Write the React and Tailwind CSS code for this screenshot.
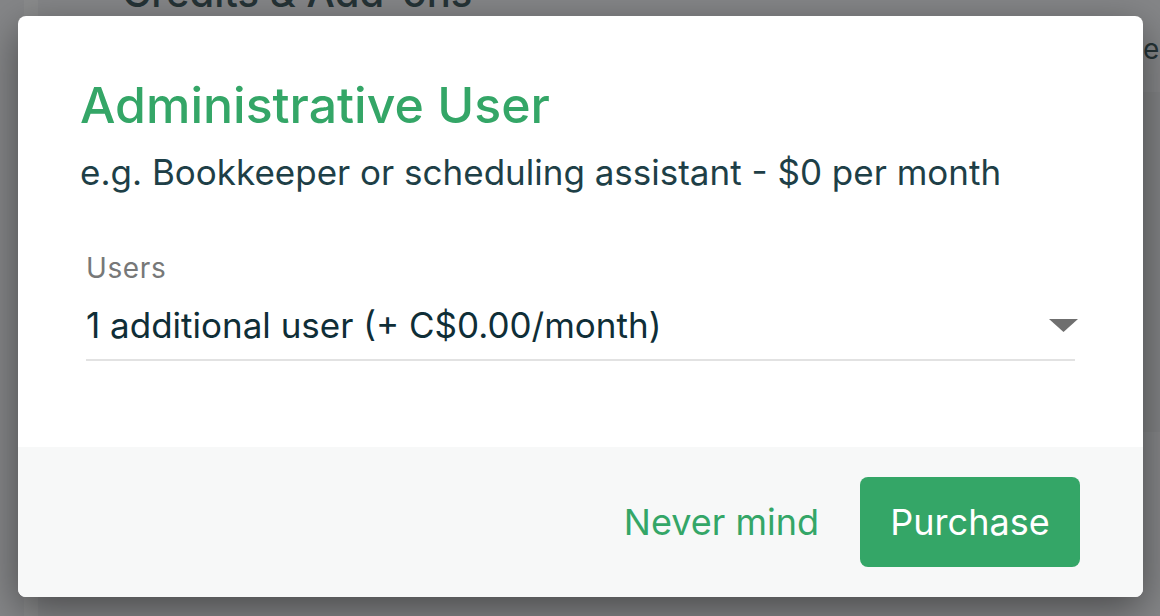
import React from 'react'

function PageBehind() {
  // the settings page, already dimmed by the overlay
  return (
    <div className="flex h-[616px] w-[1160px] bg-[#858688]">
      <div className="w-[24px] shrink-0" />
      <div className="w-[14px] shrink-0 bg-[#8a8b8c]" />
      <div className="flex flex-1 flex-col">
        <div className="mt-[-27px] pl-[84px] text-[40px] font-medium leading-none text-[#253336]">
          Credits &amp; Add-ons
        </div>
        <div className="mt-[22px] flex justify-end">
          <span className="w-[17px] overflow-hidden text-[28px] leading-none text-[#253336]">e</span>
        </div>
        <div className="mt-[29px] h-[340px] bg-[#818284]" />
      </div>
    </div>
  )
}

export default function App() {
  return (
    <div className="relative h-[616px] w-[1160px] overflow-hidden font-['Inter',sans-serif]">
      <PageBehind />

      {/* Dialog */}
      <div className="absolute left-[18px] top-[16px] w-[1125px] overflow-hidden rounded-[8px] bg-white shadow-[0_12px_40px_rgba(0,0,0,0.45)]">
        <div className="flex h-[431px] flex-col px-[62px] pt-[64px]">
          <h2 className="text-[50px] font-medium leading-none text-[#34a667]">Administrative User</h2>
          <p className="mt-[25px] text-[35px] leading-none text-[#1e3f47]">
            e.g. Bookkeeper or scheduling assistant - $0 per month
          </p>

          <div className="mx-[6px] mt-[64px] flex flex-col">
            <label className="text-[28px] leading-none tracking-[0.6px] text-[#777878]">Users</label>
            <div className="mt-[26px] flex justify-between border-b-2 border-[#e2e2e2] pb-[16px]">
              <span className="text-[35px] leading-none text-[#0f2e37]">1 additional user (+ C$0.00/month)</span>
              <svg width="29" height="13" viewBox="0 0 29 13" className="mr-[-3px] mt-[11px]">
                <polygon points="0,0 29,0 14.5,13" fill="#6f6f6f" />
              </svg>
            </div>
          </div>
        </div>

        <div className="flex h-[150px] items-center justify-end gap-[41px] bg-[#f7f8f8] pr-[63px]">
          <button className="text-[36px] leading-none text-[#34a667]">Never mind</button>
          <button className="h-[90px] w-[220px] rounded-[8px] bg-[#34a667] text-[36px] leading-none text-white">
            Purchase
          </button>
        </div>
      </div>
    </div>
  )
}
